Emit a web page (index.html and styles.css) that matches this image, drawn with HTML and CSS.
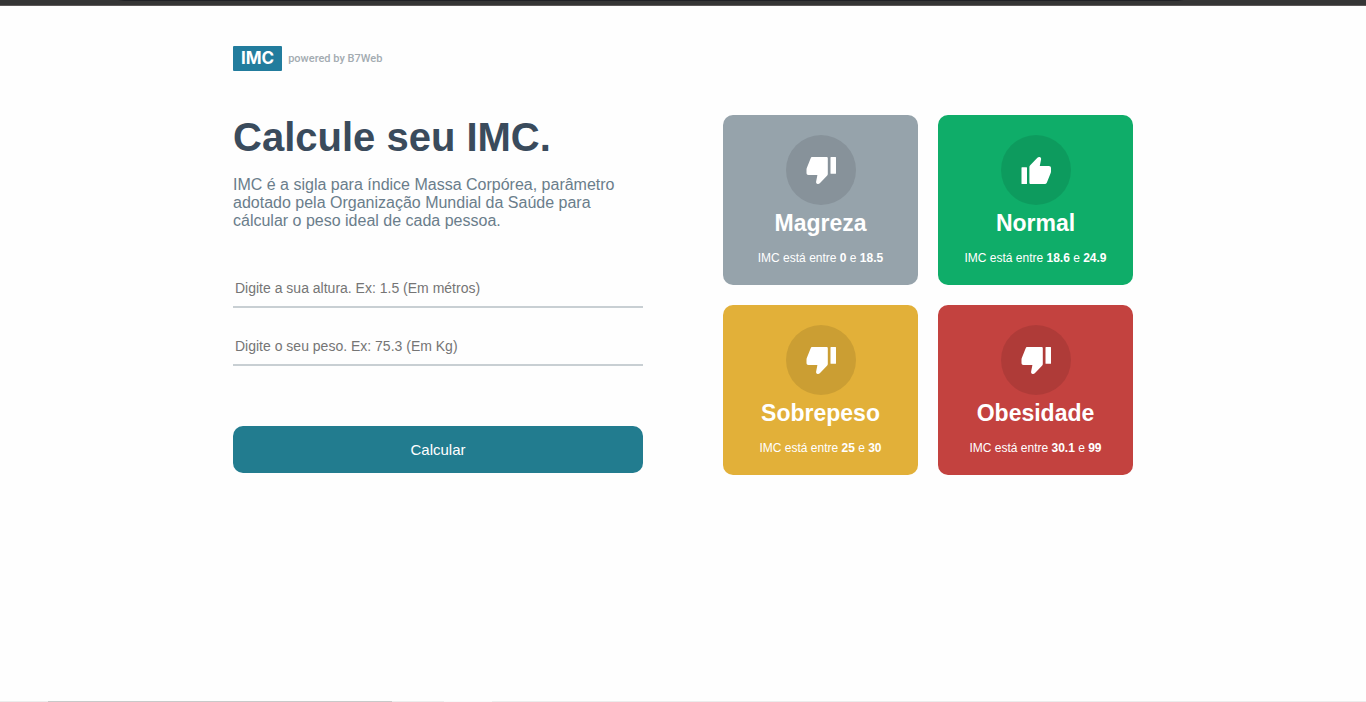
FILE: index.html
```
<!DOCTYPE html>
<html lang="pt-BR">
<head>
<meta charset="utf-8">
<meta name="viewport" content="width=device-width, initial-scale=1">
<title>Calculadora de IMC</title>
<link rel="stylesheet" href="styles.css">
</head>
<body>
<svg class="sprite" aria-hidden="true">
  <symbol id="thumb-down" viewBox="0 0 30 27">
    <path d="M6.300 0H20.500c.8 0 1.300.5 1.300 1.300V17c0 .7-.3 1.300-.8 1.800L13.800 26.200c-.6.600-1.300.8-2.100.7-1.100-.2-1.800-1.100-1.600-2.200L11.400 18H2.500C1.200 18 .5 17.200.5 16V12.400c0-.5.100-.9.300-1.400L4.600 1.400C5 .5 5.500 0 6.300 0zM25 0h4.500q.5 0 .5.500v15.800q0 .5-.5.500H25q-.5 0-.5-.5V.5q0-.5.500-.5z"/>
  </symbol>
  <symbol id="thumb-up" viewBox="0 0 30 27">
    <path d="M24.200 27H9.700c-.8 0-1.300-.5-1.300-1.300V10c0-.7.3-1.300.8-1.800L16.400.8c.6-.6 1.300-.8 2.100-.7 1.100.2 1.800 1.100 1.600 2.200L18.800 9h9c1.400 0 2.200.8 2.200 2V14.600c0 .5-.1.900-.3 1.400l-3.800 9.600c-.3.900-.9 1.400-1.700 1.400zM1 10.200h4.500q.5 0 .5.500v15.800q0 .5-.5.500H1q-.5 0-.5-.5V10.700q0-.5.500-.5z"/>
  </symbol>
</svg>
<div class="topbar"></div>
<div class="page">
  <header class="header">
    <span class="logo">IMC</span>
    <span class="powered">powered by B7Web</span>
  </header>
  <main class="columns">
    <section class="intro">
      <h1 class="title">Calcule seu IMC.</h1>
      <p class="description">IMC é a sigla para índice Massa Corpórea, parâmetro adotado pela Organização Mundial da Saúde para cálcular o peso ideal de cada pessoa.</p>
      <form class="form">
        <input class="field" type="text" aria-label="Altura em metros" placeholder="Digite a sua altura. Ex: 1.5 (Em métros)">
        <input class="field" type="text" aria-label="Peso em quilos" placeholder="Digite o seu peso. Ex: 75.3 (Em Kg)">
        <button class="submit" type="button">Calcular</button>
      </form>
    </section>
    <section class="cards">
      <article class="card card-thin">
        <div class="badge"><svg class="icon" aria-hidden="true"><use href="#thumb-down"/></svg></div>
        <h2 class="card-title">Magreza</h2>
        <p class="range">IMC está entre <strong>0</strong> e <strong>18.5</strong></p>
      </article>
      <article class="card card-normal">
        <div class="badge"><svg class="icon" aria-hidden="true"><use href="#thumb-up"/></svg></div>
        <h2 class="card-title">Normal</h2>
        <p class="range">IMC está entre <strong>18.6</strong> e <strong>24.9</strong></p>
      </article>
      <article class="card card-over">
        <div class="badge"><svg class="icon" aria-hidden="true"><use href="#thumb-down"/></svg></div>
        <h2 class="card-title">Sobrepeso</h2>
        <p class="range">IMC está entre <strong>25</strong> e <strong>30</strong></p>
      </article>
      <article class="card card-obese">
        <div class="badge"><svg class="icon" aria-hidden="true"><use href="#thumb-down"/></svg></div>
        <h2 class="card-title">Obesidade</h2>
        <p class="range">IMC está entre <strong>30.1</strong> e <strong>99</strong></p>
      </article>
    </section>
  </main>
</div>
<div class="bottombar"></div>
</body>
</html>
```
FILE: styles.css
```
* {
  box-sizing: border-box;
  margin: 0;
}

body {
  display: flex;
  flex-direction: column;
  min-height: 100vh;
  background: #fefefe;
  font-family: "Liberation Sans", Arial, sans-serif;
}

.sprite {
  display: none;
}

.topbar {
  height: 6px;
  background: linear-gradient(90deg, transparent 118px, #202125 124px, #202125 calc(100% - 188px), transparent calc(100% - 182px)) top / 100% 1px no-repeat, #353535;
  border-bottom: 1px solid #5c5858;
}

.page {
  flex: 1;
  width: 100%;
  max-width: 940px;
  margin: 0 auto;
  padding: 40px 20px;
}

.header {
  display: flex;
  align-items: center;
  gap: 6px;
}

.logo {
  padding: 0 8px;
  border-radius: 1px;
  background: #227c9d;
  color: #fff;
  font: 700 17px/25px Inter, sans-serif;
}

.powered {
  color: #a3abb1;
  font: 500 11px/14px Roboto, sans-serif;
}

.columns {
  display: grid;
  grid-template-columns: repeat(auto-fit, minmax(340px, 1fr));
  align-items: start;
  gap: 40px 80px;
  margin-top: 44px;
}

.title {
  color: #3a4b5c;
  font-size: 40px;
  line-height: 44px;
}

.description {
  margin-top: 17px;
  color: #6a7d8b;
  font-size: 16px;
  line-height: 18px;
}

.form {
  display: flex;
  flex-direction: column;
  gap: 20px;
  margin-top: 40px;
}

.field {
  width: 100%;
  padding: 10px 2px;
  border: 0;
  border-bottom: 2px solid #c8cfd3;
  background: transparent;
  color: #3a4b5c;
  font: 14px/16px "Liberation Sans", Arial, sans-serif;
}

.field::placeholder {
  color: #757575;
}

.submit {
  margin-top: 40px;
  padding: 15px;
  border: 0;
  border-radius: 10px;
  background: #227c8f;
  color: #fff;
  font: 15px/17px "Liberation Sans", Arial, sans-serif;
  cursor: pointer;
}

.cards {
  display: grid;
  grid-template-columns: 1fr 1fr;
  gap: 20px;
}

.card {
  display: flex;
  flex-direction: column;
  align-items: center;
  padding: 20px 10px;
  border-radius: 10px;
  color: #fff;
  text-align: center;
}

.card-thin {
  background: #96a3ab;
}

.card-normal {
  background: #0fad69;
}

.card-over {
  background: #e2b039;
}

.card-obese {
  background: #c3423f;
}

.badge {
  display: grid;
  place-items: center;
  width: 70px;
  height: 70px;
  border-radius: 50%;
  background: rgba(0, 0, 0, 0.1);
}

.card-thin .badge {
  background: #87929a;
}

.icon {
  width: 30px;
  height: 27px;
  fill: #fff;
}

.card-title {
  margin-top: 5px;
  font-size: 23px;
  line-height: 26px;
}

.range {
  margin-top: 15px;
  font-size: 12px;
  line-height: 14px;
}

.bottombar {
  height: 1px;
  background: linear-gradient(90deg, #ececec 48px, #c9c9c9 48px, #c9c9c9 392px, #ececec 392px, #ececec 444px, #f8f8f8 444px, #f8f8f8 492px, #ececec 492px);
}
```
